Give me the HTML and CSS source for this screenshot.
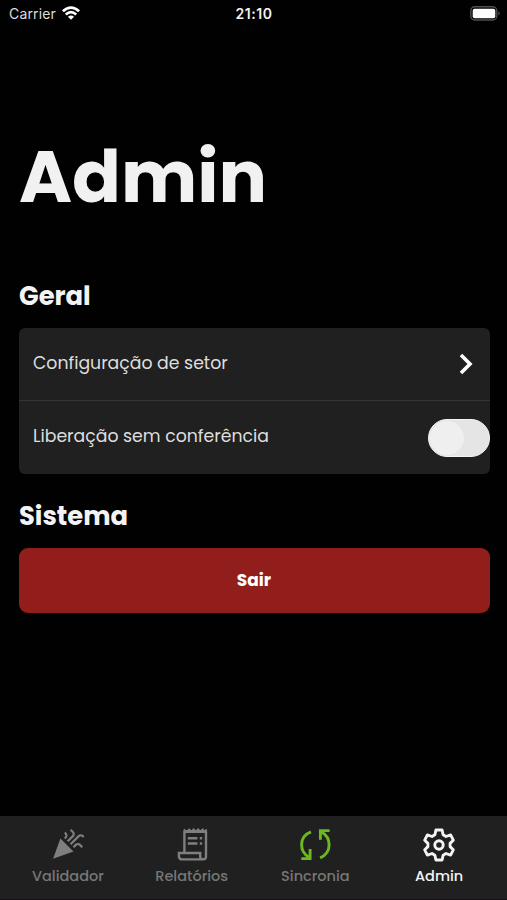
FILE: index.html
```html
<!DOCTYPE html>
<html lang="pt-BR">
<head>
<meta charset="utf-8">
<title>Admin</title>
<link rel="stylesheet" href="styles.css">
</head>
<body>
<header class="status">
  <div class="carrier"><span>Carrier</span>
    <svg width="18" height="14" viewBox="0 0 18 14" fill="none" stroke="#fff" stroke-width="2.7"><path d="M.9 5.3Q9-2.2 17.1 5.3"/><path d="M3.8 8.6Q9 3.8 14.2 8.6"/><path d="M9 13.8L5.9 10.7Q9 8.3 12.1 10.7Z" fill="#fff" stroke="none"/></svg>
  </div>
  <div class="clock">21:10</div>
  <svg class="battery" width="31" height="15" viewBox="0 0 31 15"><rect x=".8" y=".8" width="26" height="13.2" rx="4" fill="none" stroke="#505050" stroke-width="1.4"/><rect x="2.7" y="2.7" width="22.6" height="9.6" rx="2" fill="#fff"/><path d="M28.5 5.2Q31 7.4 28.5 9.6Z" fill="#606060"/></svg>
</header>
<main>
  <h1>Admin</h1>
  <h2 class="general">Geral</h2>
  <section class="card">
    <div class="row"><span>Configuração de setor</span>
      <svg class="chevron" width="16" height="24" viewBox="0 0 16 24" fill="none" stroke="#fff" stroke-width="3.6"><path d="M3 3L12 12L3 21"/></svg>
    </div>
    <div class="row"><span>Liberação sem conferência</span>
      <div class="switch"><i></i></div>
    </div>
  </section>
  <h2 class="system">Sistema</h2>
  <button>Sair</button>
</main>
<nav>
  <a class="tab"><svg width="36" height="36" viewBox="0 0 36 36" fill="#7f7f7f"><path transform="translate(.2 .8) scale(1.455)" d="M2 22l14-5-9-9zM14.53 12.53l5.59-5.59c.49-.49 1.28-.49 1.77 0l.59.59 1.06-1.06-.59-.59c-1.07-1.07-2.82-1.07-3.89 0l-5.59 5.59 1.06 1.06zM10.06 6.88l-.59.59 1.06 1.06.59-.59c1.07-1.07 1.07-2.82 0-3.89l-.59-.59-1.06 1.07.59.59c.48.48.48 1.28 0 1.76zM17.06 11.88l-1.59 1.59 1.06 1.06 1.59-1.59c.49-.49 1.28-.49 1.77 0l1.61 1.61 1.06-1.06-1.61-1.61c-1.08-1.07-2.82-1.07-3.9 0zM15.06 5.88l-3.59 3.59 1.06 1.06 3.59-3.59c1.07-1.07 1.07-2.82 0-3.89l-1.59-1.59-1.06 1.06 1.59 1.59c.48.49.48 1.29 0 1.77z"/></svg><span>Validador</span></a>
  <a class="tab"><svg width="36" height="36" viewBox="0 0 36 36" fill="none" stroke="#7f7f7f" stroke-width="2.4"><path d="M10.4 26V5.8H32V30.5Q32 33.4 29.2 33.4H8.2Q4.9 33.4 4.9 30V27H26.2V30.5Q26.2 33.4 29.2 33.4"/><path stroke-width="1.5" d="M9.8 3.2L12.5 5.6L15.2 3.2L17.2 5.6L19.7 3.2L21.7 5.6L24.2 3.2L26.2 5.6L28.7 3.2L30.3 5.6L32.7 3.2"/><path d="M13.8 12.3H23.4M25.8 12.3H28.2M13.8 17.5H23.4M25.8 17.5H28.2"/></svg><span>Relatórios</span></a>
  <a class="tab"><svg width="36" height="36" viewBox="0 0 36 36" fill="none" stroke="#6bb91f" stroke-width="2.9"><path d="M14 5.8C1.8 10.5 1.8 25.5 12.2 31.4M4.3 32.6H13.1V23"/><path d="M23.1 31.8C35.2 26.5 34.7 11.5 24.2 5.7M32.6 4.6H23.4V13.8"/></svg><span>Sincronia</span></a>
  <a class="tab active"><svg width="36" height="36" viewBox="0 0 36 36" fill="none" stroke="#f4f4f4" stroke-width="2.9" stroke-linejoin="round"><path d="M14.9 4H21.1L22.1 8.8L25 10.5L29.6 8.9L32.3 14.2L29.1 17.4V20.6L32.3 23.8L29.6 29.1L25 27.5L22.1 29.2L21.1 34H14.9L13.9 29.2L11 27.5L6.4 29.1L3.7 23.8L6.9 20.6V17.4L3.7 14.2L6.4 8.9L11 10.5L13.9 8.8Z"/><circle cx="18" cy="19" r="4.2"/></svg><span>Admin</span></a>
</nav>
</body>
</html>
```
FILE: styles.css
```css
* { box-sizing: border-box; }
body {
  margin: 0;
  height: 900px;
  overflow: hidden;
  display: flex;
  flex-direction: column;
  background: #020102;
  color: #f3f3f3;
  font-family: Poppins, Inter, "Liberation Sans", sans-serif;
}
.status {
  height: 27px;
  display: grid;
  grid-template-columns: 1fr auto 1fr;
  align-items: center;
  padding: 0 6px 0 9px;
  font-family: Inter, "Liberation Sans", sans-serif;
}
.carrier { display: flex; align-items: center; gap: 6px; color: #ddd; font-size: 14px; letter-spacing: .15px; }
.carrier svg { margin-top: -1px; }
.clock { font-size: 14px; font-weight: 600; letter-spacing: .5px; margin-left: -2px; }
.battery { justify-self: end; }
main { flex: 1; padding: 0 17px 0 18px; }
h1, h2 { margin: 0; font-weight: 700; white-space: nowrap; }
h1 { margin: 100px 0 0 1px; height: 100px; font-size: 72px; line-height: 100px; color: #f1f1f1; }
h2 { padding-left: 1px; font-size: 25.8px; line-height: 36px; }
.general { margin-top: 51px; }
.card { margin: 14px .5px 0; height: 146px; border-radius: 6px; background: #202020; }
.row { height: 72px; display: flex; align-items: center; justify-content: space-between; padding-left: 14.5px; font-size: 17.3px; color: #dedede; white-space: nowrap; }
.row + .row { height: 74px; border-top: 1.5px solid #353535; }
.row span { margin-top: -3px; }
.chevron { margin: 0 16px 0 0; }
.switch { width: 62px; height: 38px; padding: 1px; border: 1px solid #f4f4f4; border-radius: 20px; background: #e5e5e5; }
.switch i { display: block; width: 34px; height: 34px; border-radius: 50%; background: #efefef; }
.system { margin-top: 24px; }
button { display: block; width: calc(100% - 1px); height: 65px; margin: 14px .5px 0; padding: 0 0 1px; border: 0; border-radius: 9px; background: #921e1b; color: #fff; font: 700 17px Poppins, Inter, sans-serif; }
nav { height: 84px; padding: 10px 6px 0; display: grid; grid-template-columns: repeat(4, 1fr); background: #202020; border-bottom: 1px solid #160e12; }
.tab { display: flex; flex-direction: column; align-items: center; color: #777; font-size: 14.5px; font-weight: 500; line-height: 22px; }
.tab span { margin-top: 3px; }
.active { color: #f4f4f4; }
```
